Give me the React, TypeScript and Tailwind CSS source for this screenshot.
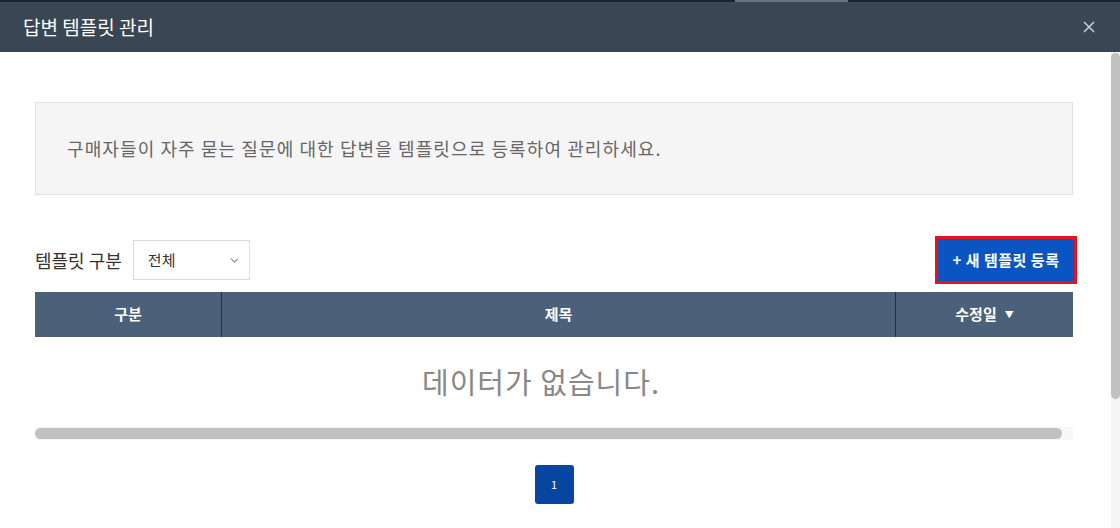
import React from "react";
import { X, ChevronDown } from "lucide-react";

const font = { fontFamily: '"Noto Sans CJK KR", "Noto Sans", sans-serif' };

const TemplateModal = () => {
  return (
    <div className="w-[1120px] h-[528px] bg-white overflow-hidden flex flex-col" style={font}>
      {/* header */}
      <div className="h-[52px] shrink-0 bg-[#3a4653] border-t-2 border-[#1d2430] flex items-center justify-between pl-[23px] pr-[22px] relative">
        <div className="absolute top-[-2px] left-[735px] w-[113px] h-[2px] bg-[#6b7480]" />
        <h1 className="text-[19px] text-white font-normal">답변 템플릿 관리</h1>
        <X className="w-[18px] h-[18px] text-[#c5cbd2]" strokeWidth={2.2} />
      </div>

      <div className="flex flex-1 min-h-0">
        <div className="flex-1 pl-[35px] pr-[38px] pt-[50px]">
          {/* info */}
          <div className="h-[93px] bg-[#f5f5f5] border border-[#e2e2e2] flex items-center pl-[31px]">
            <p className="text-[18px] tracking-[1.1px] text-[#666]">
              구매자들이 자주 묻는 질문에 대한 답변을 템플릿으로 등록하여 관리하세요.
            </p>
          </div>

          {/* filter row */}
          <div className="mt-[41px] h-[48px] flex items-center justify-between">
            <div className="flex items-center gap-[11px]">
              <span className="text-[18px] text-[#333]">템플릿 구분</span>
              <div className="w-[117px] h-[40px] border border-[#dcdcdc] flex items-center justify-between pl-[14px] pr-[8px]">
                <span className="text-[15px] text-[#333]">전체</span>
                <ChevronDown className="w-[13px] h-[13px] text-[#888]" />
              </div>
            </div>
            <button className="mr-[-4px] h-[48px] w-[142px] border-[3px] border-[#e2141c] bg-[#0a55c2] text-white text-[15px] tracking-[0.5px] font-bold">
              + 새 템플릿 등록
            </button>
          </div>

          {/* table */}
          <div className="mt-[8px]">
            <div className="h-[45px] bg-[#4a6179] flex text-white text-[15px] font-bold">
              <div className="w-[187px] flex items-center justify-center border-r border-[#1e3146]">구분</div>
              <div className="flex-1 flex items-center justify-center border-r border-[#1e3146]">제목</div>
              <div className="w-[177px] flex items-center justify-center gap-[8px]">
                수정일
                <span className="text-[9px]">▼</span>
              </div>
            </div>
            <div className="h-[90px] flex items-center justify-center pr-[26px]">
              <span className="text-[29px] tracking-[1px] text-[#888]">데이터가 없습니다.</span>
            </div>
            <div className="h-[13px] bg-[#f7f7f7] flex items-center">
              <div className="h-[11px] w-[1027px] bg-[#c1c1c1] rounded-full" />
            </div>
          </div>

          {/* pagination */}
          <div className="mt-[25px] flex justify-center">
            <div className="w-[39px] h-[39px] rounded-[3px] bg-[#0645a0] text-white text-[11px] flex items-center justify-center">
              1
            </div>
          </div>
        </div>

        {/* scrollbar */}
        <div className="w-[9px] bg-[#f5f5f5] pt-[1px]">
          <div className="h-[346px] bg-[#c1c1c1] rounded-full" />
        </div>
      </div>
    </div>
  );
};

export default function App() {
  return <TemplateModal />;
}
